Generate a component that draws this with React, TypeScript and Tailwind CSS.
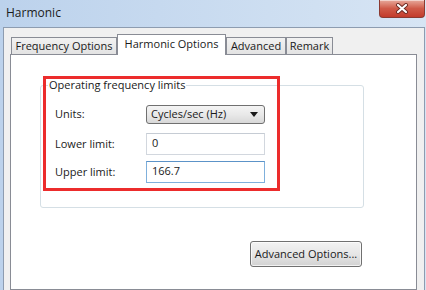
import React from 'react';

const font = { fontFamily: '"Open Sans", "Noto Sans", sans-serif' };

function CloseButton() {
  return (
    <div className="mr-[1px] w-[46px] h-[18px] rounded-b-[4px] border border-t-0 border-[#8b3a31] bg-gradient-to-b from-[#e6a99c] via-[#cf5a48] to-[#c33b2b] flex items-center justify-center shadow-[inset_0_1px_0_rgba(255,255,255,0.5)]">
      <svg width="14" height="11" viewBox="0 0 14 11">
        <path d="M3 2 L11 9 M11 2 L3 9" stroke="#6b2a22" strokeWidth="4" strokeLinecap="round" />
        <path d="M3 2 L11 9 M11 2 L3 9" stroke="#ffffff" strokeWidth="2.2" strokeLinecap="round" />
      </svg>
    </div>
  );
}

function Tab({ label, width, active }: { label: string; width: string; active?: boolean }) {
  if (active) {
    return (
      <div className={`${width} h-[21px] bg-white border border-b-0 border-[#898c95] flex items-start justify-center pt-[1px] text-[11px] text-[#1a1a1a]`}>
        {label}
      </div>
    );
  }
  return (
    <div className={`${width} h-[18px] bg-gradient-to-b from-[#f2f2f2] to-[#e3e3e3] border border-[#898c95] flex items-center justify-center text-[11px] text-[#1a1a1a]`}>
      {label}
    </div>
  );
}

export default function App() {
  return (
    <div style={font} className="w-[426px] h-[290px] overflow-hidden bg-gradient-to-r from-[#bcd2ec] to-[#d7e5f4] flex flex-col">
      {/* Title bar */}
      <div className="h-[27px] flex items-start justify-between shrink-0">
        <span className="pl-[6px] pt-[5px] text-[12px] leading-[16px] text-[#1b1b1b]">Harmonic</span>
        <CloseButton />
      </div>

      {/* Dialog body */}
      <div className="flex-1 ml-[3px] mr-[1px] border-l border-t border-r border-[#8d9cb0] bg-[#f0f0f0] flex flex-col pt-[6px] pl-[6px] pr-[7px] min-h-0">
        <div className="flex items-end h-[21px] pl-[1px] -mb-px relative z-10 shrink-0">
          <Tab label="Frequency Options" width="w-[106px]" />
          <Tab label="Harmonic Options" width="w-[109px]" active />
          <Tab label="Advanced" width="w-[60px]" />
          <Tab label="Remark" width="w-[47px]" />
        </div>

        <div className="flex-1 bg-white border border-[#898c95] relative">
          {/* Group box */}
          <div className="ml-[29px] mt-[30px] w-[324px] h-[123px] border border-[#d5dfe5] rounded-[3px] relative pl-[14px] pt-[19px] text-[11px] text-[#1a1a1a]">
            <span className="absolute left-[7px] -top-[9px] bg-white px-[1px] leading-[16px]">Operating frequency limits</span>

            <div className="flex items-center h-[19px]">
              <span className="w-[91px]">Units:</span>
              <div className="w-[119px] h-[19px] rounded-[3px] border border-[#707070] bg-gradient-to-b from-[#f4f4f4] via-[#e9e9e9] to-[#d8d8d8] flex items-center justify-between pl-[4px] pr-[6px]">
                <span>Cycles/sec (Hz)</span>
                <svg width="8" height="5" viewBox="0 0 8 5">
                  <path d="M0 0 H8 L4 5 Z" fill="#1a1a1a" />
                </svg>
              </div>
            </div>

            <div className="flex items-center h-[22px] mt-[9px]">
              <span className="w-[91px]">Lower limit:</span>
              <div className="w-[119px] h-[22px] border border-[#d2d7de] border-t-[#c6ccd4] bg-white flex items-center pl-[5px] pb-[2px]">0</div>
            </div>

            <div className="flex items-center h-[22px] mt-[6px]">
              <span className="w-[91px]">Upper limit:</span>
              <div className="w-[119px] h-[22px] border border-[#7fb0dc] border-t-[#5c93c8] bg-white flex items-center pl-[5px] pb-[2px]">166.7</div>
            </div>
          </div>

          {/* Button row */}
          <div className="ml-[29px] mt-[33px] w-[324px] flex justify-end pr-[2px]">
            <div className="w-[112px] h-[26px] rounded-[3px] border border-[#707070] bg-gradient-to-b from-[#f3f3f3] via-[#e6e6e6] to-[#d2d2d2] shadow-[inset_0_0_0_1px_rgba(255,255,255,0.7)] flex items-center justify-center text-[11px] text-[#1a1a1a]">
              Advanced Options...
            </div>
          </div>

          {/* Red highlight annotation */}
          <div className="absolute left-[32px] top-[21px] w-[237px] h-[115px] border-[3px] border-[#ec2c2c] pointer-events-none" />
        </div>
      </div>
    </div>
  );
}
